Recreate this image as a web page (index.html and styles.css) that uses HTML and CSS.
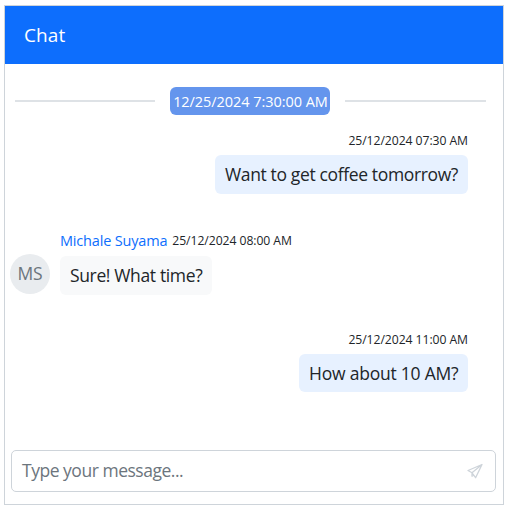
FILE: index.html
```
<!DOCTYPE html>
<html lang="en">
<head>
<meta charset="utf-8">
<title>Chat</title>
<link rel="stylesheet" href="styles.css">
</head>
<body>
<main class="chat">
  <header class="header"><span class="title">Chat</span></header>
  <section class="messages">
    <div class="break"><span class="rule"></span><span class="stamp"><span class="stamp-text">12/25/2024 7:30:00 AM</span></span><span class="rule rule-end"></span></div>
    <article class="message sent first">
      <div class="meta"><time class="time">25/12/2024 07:30 AM</time></div>
      <div class="bubble coffee">Want to get coffee tomorrow?</div>
    </article>
    <article class="message received">
      <div class="avatar">MS</div>
      <div class="content">
        <div class="meta"><span class="author">Michale Suyama</span><time class="time">25/12/2024 08:00 AM</time></div>
        <div class="bubble sure">Sure! What time?</div>
      </div>
    </article>
    <article class="message sent last">
      <div class="meta"><time class="time">25/12/2024 11:00 AM</time></div>
      <div class="bubble ten">How about 10 AM?</div>
    </article>
  </section>
  <footer class="composer">
    <span class="placeholder">Type your message...</span>
    <svg class="send" viewBox="0 0 16 16" fill="none" stroke="currentColor" stroke-width="1.3" stroke-linejoin="round"><path d="M15 1.5 1 7.5l4 2.3L8.6 14.7ZM15 1.5 5 9.8v3.4l2-1.2"/></svg>
  </footer>
</main>
</body>
</html>
```
FILE: styles.css
```
* { box-sizing: border-box; }
body {
  margin: 0;
  padding: 5px 0 0 4px;
  background: #fff;
  font-family: "Open Sans", "Noto Sans", sans-serif;
  color: #212529;
}
.chat {
  display: flex;
  flex-direction: column;
  width: 500px;
  height: 500px;
  border: 1px solid #ced4da;
}
.header {
  display: flex;
  align-items: center;
  height: 58px;
  padding: 0 0 1px 19px;
  background: #0d6efd;
  color: #fff;
  font-size: 19px;
  letter-spacing: 0.1px;
}
.messages {
  display: flex;
  flex: 1;
  flex-direction: column;
  padding-top: 23px;
}
.break {
  display: flex;
  align-items: center;
  gap: 15px;
  height: 28px;
  padding: 0 17px 0 10px;
}
.rule { flex: none; width: 140px; height: 2px; background: #dee2e6; }
.rule-end { width: 141px; }
.stamp {
  display: flex;
  align-items: center;
  justify-content: center;
  width: 160px;
  height: 28px;
  padding-left: 1px;
  border-radius: 6px;
  background: #6495ed;
  color: #fff;
  font-size: 14.5px;
  letter-spacing: -0.05px;
  white-space: nowrap;
}
.message { height: 64px; margin-bottom: 36px; }
.sent {
  display: flex;
  flex-direction: column;
  align-items: flex-end;
  padding-right: 35px;
}
.first { margin-top: 16px; }
.first .meta { padding-top: 1px; }
.received { display: flex; padding-left: 5px; }
.received .meta { margin-bottom: 7px; }
.last .meta { margin-bottom: 5px; padding-bottom: 2px; }
.avatar {
  display: flex;
  align-items: center;
  justify-content: center;
  width: 40px;
  height: 40px;
  margin: 23px 10px 0 0;
  padding-bottom: 2px;
  border-radius: 50%;
  background: #e9ecef;
  color: #6c757d;
  font-size: 17.5px;
  letter-spacing: -0.2px;
}
.meta {
  display: flex;
  flex: none;
  align-items: center;
  height: 18px;
  margin-bottom: 6px;
  gap: 5px;
  white-space: nowrap;
}
.time { font-size: 12.2px; letter-spacing: -0.06px; }
.author { color: #0d6efd; font-size: 14.5px; letter-spacing: -0.18px; }
.bubble {
  display: flex;
  align-items: center;
  height: 39px;
  padding: 0 10px 1px;
  border-radius: 6px;
  background: #e7f1ff;
  font-size: 17.5px;
  letter-spacing: -0.36px;
  white-space: nowrap;
}
.coffee { width: 253px; }
.sure { width: 152px; padding-bottom: 2px; background: #f8f9fa; }
.ten { width: 169px; height: 38px; letter-spacing: -0.22px; }
.composer {
  display: flex;
  align-items: center;
  justify-content: space-between;
  height: 42px;
  margin: 0 7px 12px 6px;
  padding: 0 12px 0 10px;
  border: 1px solid #ced4da;
  border-radius: 5px;
  color: #6c757d;
  font-size: 17.5px;
}
.placeholder { padding-bottom: 2px; letter-spacing: -0.48px; }
.send { width: 16px; height: 16px; color: #ced4da; }
```
